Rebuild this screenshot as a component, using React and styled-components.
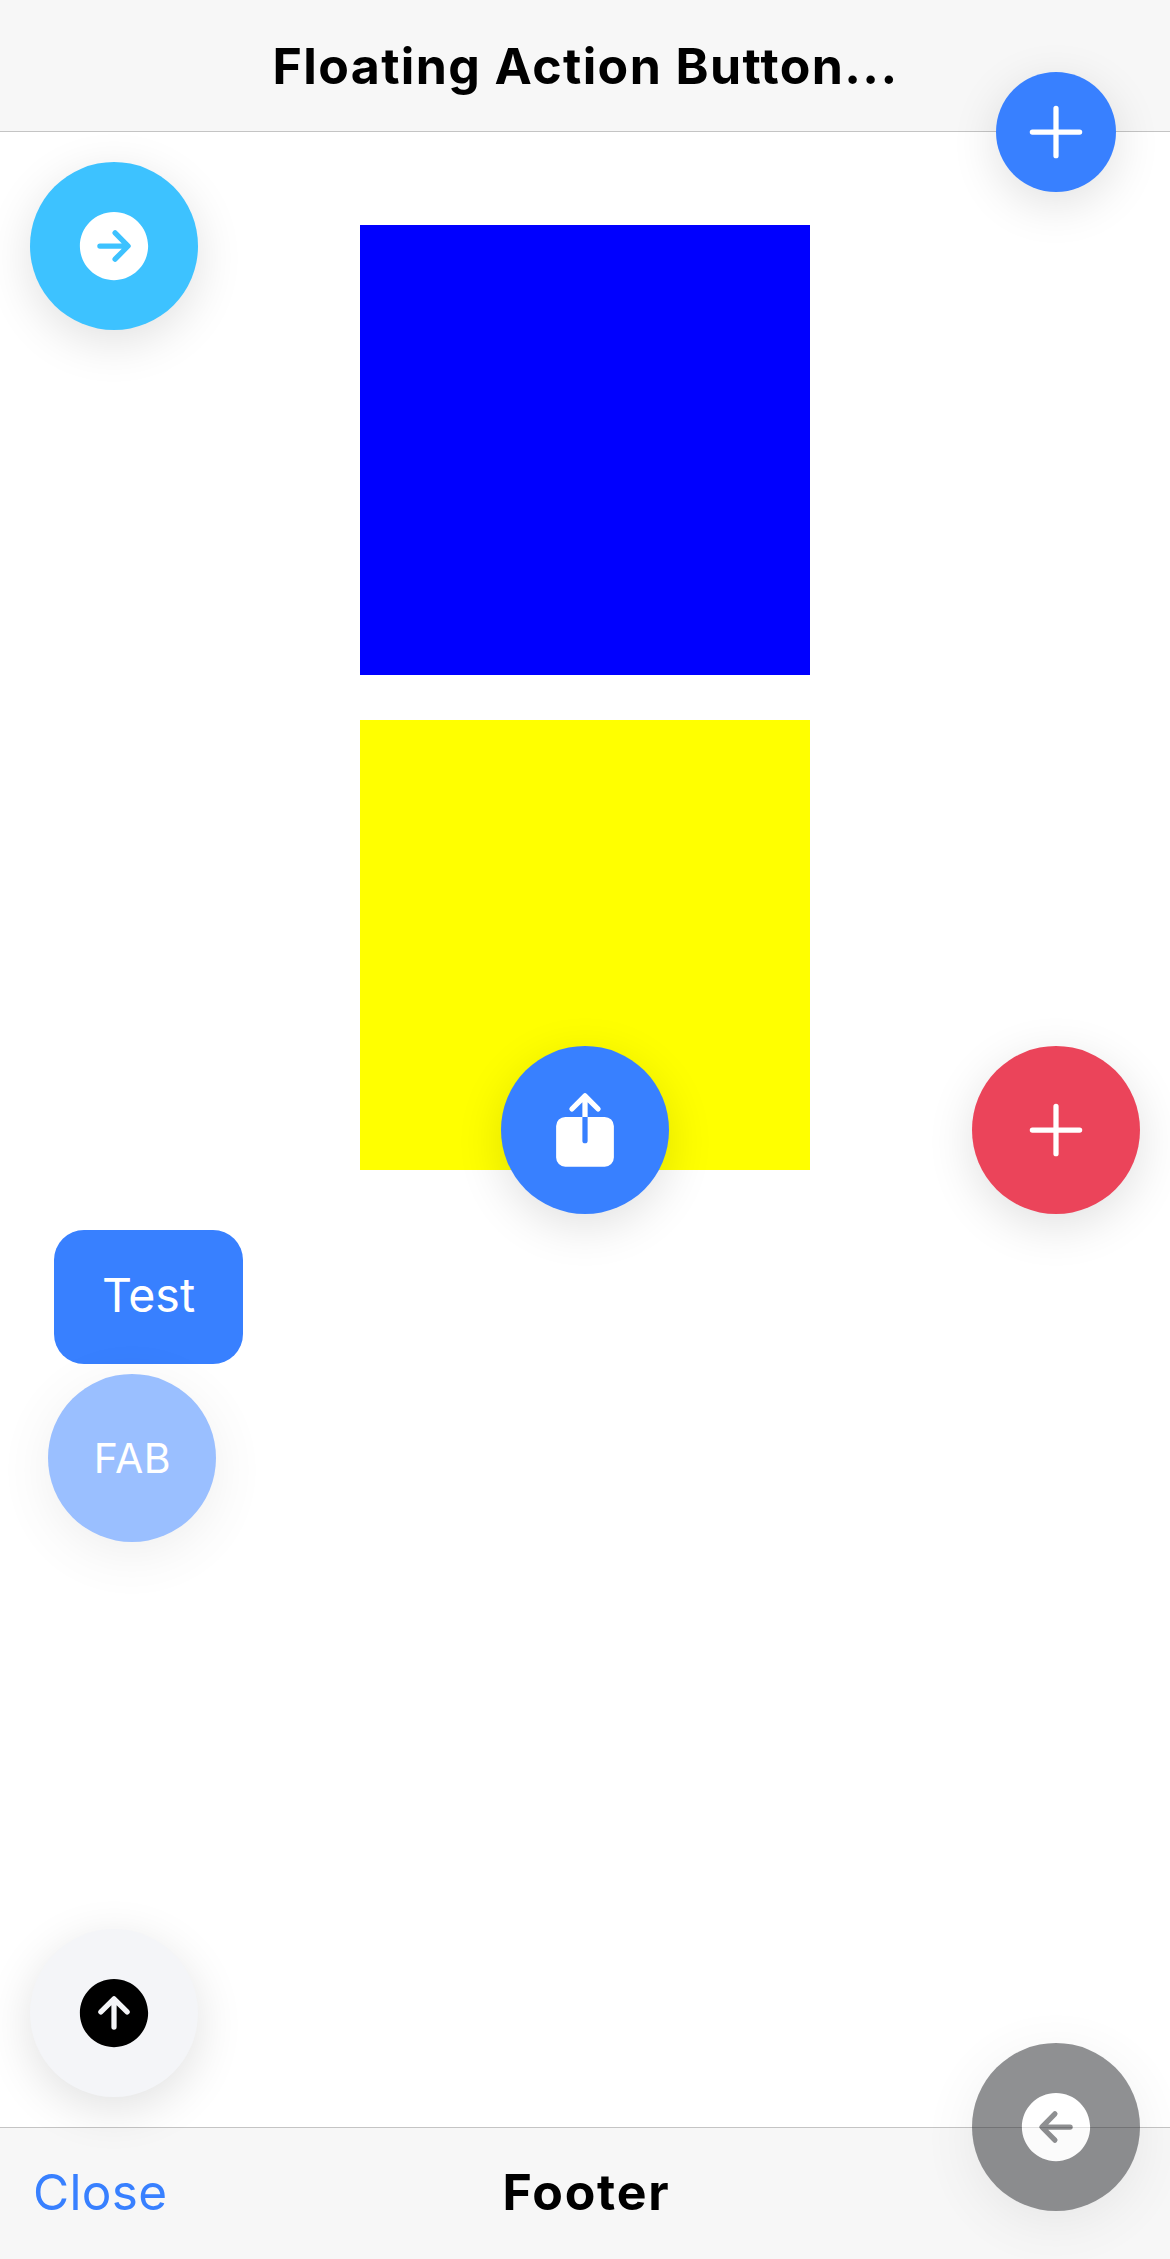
import React from "react";
import styled, { createGlobalStyle } from "styled-components";
import {
  IoAdd,
  IoArrowBackCircle,
  IoArrowForwardCircle,
  IoArrowUpCircle,
  IoShare,
} from "react-icons/io5";

const GlobalStyle = createGlobalStyle`
  *, *::before, *::after { box-sizing: border-box; }
  body {
    margin: 0;
    background: #fff;
    font-family: Inter, "Liberation Sans", sans-serif;
  }
`;

const Page = styled.div`
  position: relative;
  display: flex;
  flex-direction: column;
  width: 1170px;
  height: 2259px;
  overflow: hidden;
  background: #fff;
`;

const Toolbar = styled.div`
  display: grid;
  grid-template-columns: 1fr auto 1fr;
  align-items: center;
  flex: none;
  height: 132px;
  padding: 0 33px;
  background: #f7f7f7;
  color: #000;
`;

const HeaderBar = styled(Toolbar).attrs({ as: "header" })`
  border-bottom: 1px solid #c4c4c4;
`;

const FooterBar = styled(Toolbar).attrs({ as: "footer" })`
  padding-bottom: 3px;
  border-top: 1px solid #c4c4c4;
`;

const Title = styled.h1`
  grid-column: 2;
  margin: 0;
  font-size: 50px;
  line-height: 60px;
  font-weight: 700;
  letter-spacing: ${(p) => p.$spacing || "0"};
  text-indent: ${(p) => p.$indent || "0"};
  white-space: nowrap;
`;

const ToolbarButton = styled.button`
  grid-column: 1;
  justify-self: start;
  padding: 0;
  border: 0;
  background: none;
  color: #3880ff;
  font: 400 49.5px/60px Inter, "Liberation Sans", sans-serif;
  letter-spacing: 0.3px;
`;

const Content = styled.main`
  flex: 1;
  display: flex;
  flex-direction: column;
  padding: 93px 48px 0;
`;

const Squares = styled.div`
  display: flex;
  flex-direction: column;
  align-items: center;
  gap: 45px;
`;

const Square = styled.div`
  width: 450px;
  height: 450px;
  background: ${(p) => p.$color};
`;

const Actions = styled.div`
  display: flex;
  flex-direction: column;
  align-items: flex-start;
  gap: 10px;
  margin-top: 60px;
`;

const Button = styled.button`
  width: 189px;
  height: 134px;
  margin-left: 6px;
  padding: 0 0 4px;
  border: 0;
  border-radius: 30px;
  background: #3880ff;
  color: #fff;
  font: 400 46.5px/60px Inter, "Liberation Sans", sans-serif;
`;

const Fab = styled.button`
  display: flex;
  align-items: center;
  justify-content: center;
  width: ${(p) => (p.$small ? 120 : 168)}px;
  height: ${(p) => (p.$small ? 120 : 168)}px;
  padding: 0;
  border: 0;
  border-radius: 50%;
  background: ${(p) => p.$color || "#3880ff"};
  color: ${(p) => p.$ink || "#fff"};
  opacity: ${(p) => (p.$dimmed ? 0.5 : 1)};
  box-shadow: 0 12px 48px rgba(0, 0, 0, 0.12);
  font: 400 41px/50px Inter, "Liberation Sans", sans-serif;
  letter-spacing: 0.6px;
  text-indent: 1px;

  svg {
    display: block;
    width: 84px;
    height: 84px;
  }
`;

const FloatingSlot = styled.div`
  position: absolute;
  top: ${(p) => p.$top}px;
  left: ${(p) => p.$left}px;
`;

export default function App() {
  return (
    <Page>
      <GlobalStyle />
      <HeaderBar>
        <Title $spacing="1.4px" $indent="1px">Floating Action Button...</Title>
      </HeaderBar>
      <Content>
        <Squares>
          <Square $color="#0000ff" />
          <Square $color="#ffff00" />
        </Squares>
        <Actions>
          <Button>Test</Button>
          <Fab $dimmed>FAB</Fab>
        </Actions>
      </Content>
      <FooterBar>
        <ToolbarButton>Close</ToolbarButton>
        <Title $spacing="1.8px" $indent="3px">Footer</Title>
      </FooterBar>

      <FloatingSlot $top={162} $left={30}>
        <Fab $color="#3dc2ff" aria-label="Forward"><IoArrowForwardCircle /></Fab>
      </FloatingSlot>
      <FloatingSlot $top={72} $left={996}>
        <Fab $small aria-label="Add"><IoAdd /></Fab>
      </FloatingSlot>
      <FloatingSlot $top={1046} $left={501}>
        <Fab aria-label="Share"><IoShare /></Fab>
      </FloatingSlot>
      <FloatingSlot $top={1046} $left={972}>
        <Fab $color="#eb445a" aria-label="Add"><IoAdd /></Fab>
      </FloatingSlot>
      <FloatingSlot $top={1929} $left={30}>
        <Fab $color="#f4f5f8" $ink="#000" aria-label="Up"><IoArrowUpCircle /></Fab>
      </FloatingSlot>
      <FloatingSlot $top={2043} $left={972}>
        <Fab $color="#222428" $dimmed aria-label="Back"><IoArrowBackCircle /></Fab>
      </FloatingSlot>
    </Page>
  );
}
